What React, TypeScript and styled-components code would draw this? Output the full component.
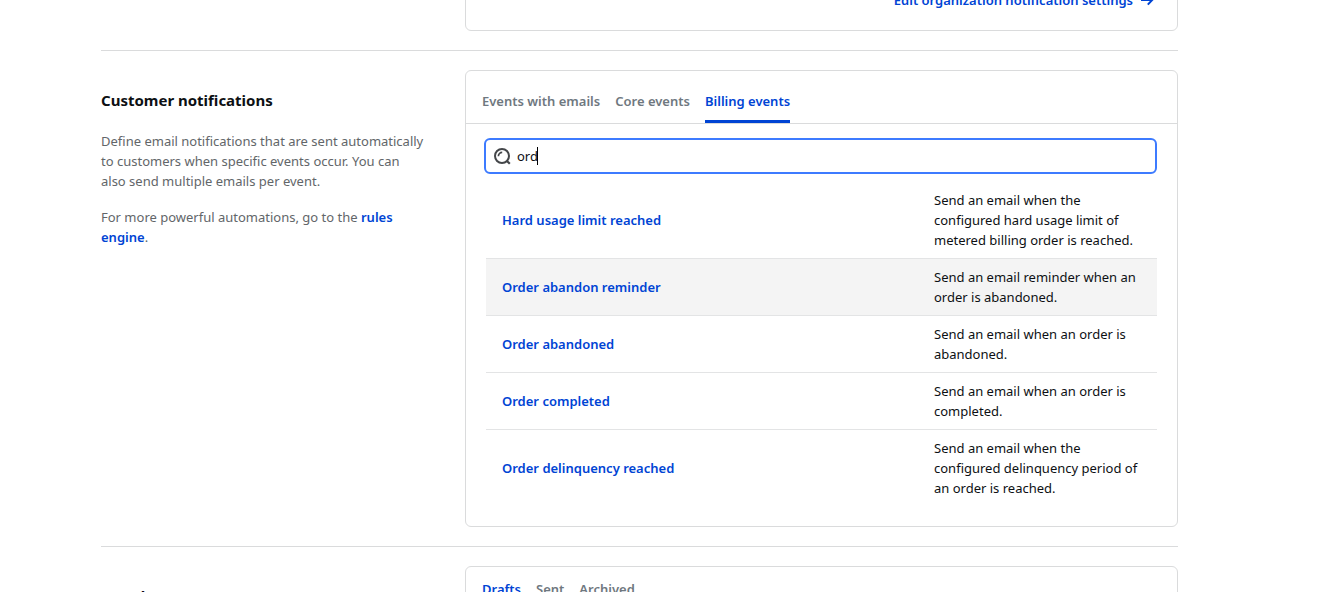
import React, { useState } from "react";
import styled, { createGlobalStyle } from "styled-components";

const GlobalStyle = createGlobalStyle`
  *, *::before, *::after { box-sizing: border-box; }
  body {
    margin: 0;
    background: #fff;
    color: #0d1013;
    font: 400 13px/20px "Segoe UI", "Noto Sans", "Open Sans", sans-serif;
  }
`;

const Page = styled.main`
  height: 100vh;
  overflow: hidden;
  padding: 0 164px 0 101px;
`;

const Section = styled.section<{ $scrolled?: boolean }>`
  display: grid;
  grid-template-columns: minmax(0, 325fr) minmax(0, 713fr);
  column-gap: 39px;
  padding-bottom: 19px;
  margin-top: ${(p) => (p.$scrolled ? "-40px" : "0")};

  & + & {
    border-top: 1px solid #dadbdc;
    padding-top: 19px;
  }
`;

const Intro = styled.div`
  padding-top: 20px;
`;

const Heading = styled.h2`
  margin: 0 0 21px;
  font-size: 15px;
  line-height: 20px;
  font-weight: 700;
`;

const Paragraph = styled.p`
  margin: 0 0 16px;
  color: #626669;
`;

const Link = styled.a`
  color: #0044d4;
  font-weight: 600;
  text-decoration: none;
`;

const Card = styled.div`
  border: 1px solid #dadbdc;
  border-radius: 6px;
`;

const CardFooter = styled.div`
  display: flex;
  justify-content: flex-end;
  padding: 29px 22px 20px;
`;

const ArrowLink = styled(Link)`
  display: flex;
  align-items: center;
  gap: 6px;
`;

const Tabs = styled.div<{ $compact?: boolean }>`
  display: flex;
  gap: 15px;
  padding: ${(p) => (p.$compact ? "12px" : "20px")} 16px 0;
  border-bottom: 1px solid #dadbdc;
`;

const Tab = styled.button<{ $active?: boolean }>`
  border: 0;
  border-bottom: 3px solid ${(p) => (p.$active ? "#0044d4" : "transparent")};
  padding: 0 0 9px;
  background: none;
  font: inherit;
  font-weight: 600;
  color: ${(p) => (p.$active ? "#0044d4" : "#6f7880")};
  cursor: pointer;
`;

const CardBody = styled.div`
  padding: 14px 20px 20px 18px;
`;

const SearchBox = styled.label`
  display: flex;
  align-items: center;
  gap: 6px;
  position: relative;
  height: 36px;
  padding: 0 7px;
  border: 2px solid #3d7bff;
  border-radius: 6px;
`;

const SearchInput = styled.input`
  flex: 1;
  min-width: 0;
  border: 0;
  padding: 0;
  outline: none;
  background: none;
  font: inherit;
  color: inherit;
  caret-color: transparent;
`;

const Caret = styled.span`
  position: absolute;
  left: 51px;
  top: 7px;
  width: 1px;
  height: 18px;
  background: #000;
`;

const EventTable = styled.table`
  width: calc(100% - 2px);
  margin: 8px 0 0 2px;
  border-collapse: separate;
  border-spacing: 0;
  table-layout: fixed;
`;

const EventRow = styled.tr<{ $hovered?: boolean }>`
  background: ${(p) => (p.$hovered ? "#f4f4f4" : "transparent")};

  &:not(:last-child) > td {
    border-bottom: 1px solid #e3e4e5;
  }
`;

const Cell = styled.td<{ $width?: string }>`
  width: ${(p) => p.$width ?? "auto"};
  padding: 8px 16px;
  vertical-align: middle;
`;

const SearchIcon = () => (
  <svg width="18" height="18" viewBox="0 0 18 18" fill="none" stroke="#444649" strokeWidth="2" aria-hidden="true">
    <circle cx="9" cy="9" r="7" />
    <path d="M13.7 13.7 16.8 16.8" strokeWidth="2.2" />
    <path d="M5.4 9.2A3.7 3.7 0 0 1 9.2 5.4" strokeWidth="1.7" />
  </svg>
);

const ArrowIcon = () => (
  <svg width="16" height="16" viewBox="0 0 16 16" fill="none" stroke="#0044d4" strokeWidth="2" aria-hidden="true">
    <path d="M2 8h11M8.8 3.4 13.2 8 8.8 12.6" />
  </svg>
);

const events = [
  { name: "Hard usage limit reached", text: "Send an email when the configured hard usage limit of metered billing order is reached." },
  { name: "Order abandon reminder", text: "Send an email reminder when an order is abandoned.", hovered: true },
  { name: "Order abandoned", text: "Send an email when an order is abandoned." },
  { name: "Order completed", text: "Send an email when an order is completed." },
  { name: "Order delinquency reached", text: "Send an email when the configured delinquency period of an order is reached." },
];

const eventTabs = ["Events with emails", "Core events", "Billing events"];
const messageTabs = ["Drafts", "Sent", "Archived"];

export default function App() {
  const [query, setQuery] = useState("ord");
  const [eventTab, setEventTab] = useState("Billing events");
  const [messageTab, setMessageTab] = useState("Drafts");

  return (
    <>
      <GlobalStyle />
      <Page>
        <Section $scrolled>
          <Intro />
          <Card>
            <CardFooter>
              <ArrowLink href="#organization">
                Edit organization notification settings
                <ArrowIcon />
              </ArrowLink>
            </CardFooter>
          </Card>
        </Section>

        <Section>
          <Intro>
            <Heading>Customer notifications</Heading>
            <Paragraph>
              Define email notifications that are sent automatically to customers when specific events occur. You can
              also send multiple emails per event.
            </Paragraph>
            <Paragraph>
              For more powerful automations, go to the <Link href="#rules">rules engine</Link>.
            </Paragraph>
          </Intro>
          <Card>
            <Tabs role="tablist">
              {eventTabs.map((t) => (
                <Tab key={t} role="tab" aria-selected={t === eventTab} $active={t === eventTab} onClick={() => setEventTab(t)}>
                  {t}
                </Tab>
              ))}
            </Tabs>
            <CardBody>
              <SearchBox>
                <SearchIcon />
                <SearchInput aria-label="Search events" value={query} onChange={(e) => setQuery(e.target.value)} />
                <Caret />
              </SearchBox>
              <EventTable>
                <tbody>
                  {events.map((e) => (
                    <EventRow key={e.name} $hovered={e.hovered}>
                      <Cell>
                        <Link href="#event">{e.name}</Link>
                      </Cell>
                      <Cell $width="239px">{e.text}</Cell>
                    </EventRow>
                  ))}
                </tbody>
              </EventTable>
            </CardBody>
          </Card>
        </Section>

        <Section>
          <Intro>
            <Heading>Broadcast messages</Heading>
          </Intro>
          <Card>
            <Tabs $compact role="tablist">
              {messageTabs.map((t) => (
                <Tab key={t} role="tab" aria-selected={t === messageTab} $active={t === messageTab} onClick={() => setMessageTab(t)}>
                  {t}
                </Tab>
              ))}
            </Tabs>
          </Card>
        </Section>
      </Page>
    </>
  );
}
